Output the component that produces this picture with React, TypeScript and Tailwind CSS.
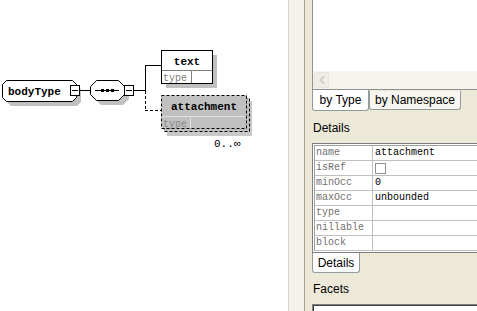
import React from "react";

const oct = (x: number, y: number, w: number, h: number, c: number) =>
  `${x + c},${y} ${x + w - c},${y} ${x + w},${y + c} ${x + w},${y + h - c} ${x + w - c},${y + h} ${x + c},${y + h} ${x},${y + h - c} ${x},${y + c}`;

const mono = "'Liberation Mono', 'DejaVu Sans Mono', monospace";

function Diagram() {
  return (
    <svg width="288" height="311" className="block" style={{ fontFamily: mono }}>
      {/* bodyType */}
      <polygon points={oct(7, 85, 74, 21, 4)} fill="#c0c0c0" />
      <polygon points={oct(2.5, 80.5, 74, 21, 4)} fill="#fff" stroke="#000" />
      <text x="8" y="94.5" fontSize="11" fontWeight="bold" fill="#000">bodyType</text>
      <rect x="70.5" y="85.5" width="9" height="10" fill="#fff" stroke="#000" />
      <line x1="72" y1="90.5" x2="78" y2="90.5" stroke="#000" />
      <line x1="80" y1="90.5" x2="90" y2="90.5" stroke="#000" />

      {/* sequence */}
      <polygon points={oct(95, 85, 34, 20, 6)} fill="#c0c0c0" />
      <polygon points={oct(90.5, 80.5, 34, 20, 6)} fill="#fff" stroke="#000" />
      <line x1="95" y1="90.5" x2="119" y2="90.5" stroke="#000" />
      <rect x="101" y="89" width="3" height="3" fill="#000" />
      <rect x="106" y="89" width="3" height="3" fill="#000" />
      <rect x="111" y="89" width="3" height="3" fill="#000" />
      <rect x="124.5" y="85.5" width="9" height="10" fill="#fff" stroke="#000" />
      <line x1="126" y1="90.5" x2="132" y2="90.5" stroke="#000" />
      <line x1="134" y1="90.5" x2="145" y2="90.5" stroke="#000" />

      {/* branches */}
      <line x1="145.5" y1="65" x2="145.5" y2="91" stroke="#000" />
      <line x1="145.5" y1="91" x2="145.5" y2="110" stroke="#000" strokeDasharray="3,2" />
      <line x1="145" y1="65.5" x2="162" y2="65.5" stroke="#000" />
      <line x1="145" y1="110.5" x2="162" y2="110.5" stroke="#000" strokeDasharray="3,2" />

      {/* text element */}
      <rect x="166" y="55" width="51" height="33" fill="#c0c0c0" />
      <rect x="161.5" y="50.5" width="51" height="33" fill="#fff" stroke="#000" />
      <line x1="162" y1="70.5" x2="212" y2="70.5" stroke="#808080" />
      <line x1="191.5" y1="71" x2="191.5" y2="83" stroke="#808080" />
      <text x="187" y="64.5" fontSize="11" fontWeight="bold" textAnchor="middle" fill="#000">text</text>
      <text x="163" y="81" fontSize="10" fill="#808080">type</text>

      {/* attachment element */}
      <rect x="167" y="101" width="85" height="35" fill="#c8c8c8" />
      <rect x="164.5" y="98.5" width="85" height="33" fill="#c0c0c0" stroke="#000" strokeDasharray="3,2" />
      <rect x="161.5" y="95.5" width="85" height="33" fill="#c0c0c0" stroke="#000" strokeDasharray="3,2" />
      <line x1="162" y1="116.5" x2="246" y2="116.5" stroke="#e0e0e0" />
      <line x1="190.5" y1="117" x2="190.5" y2="128" stroke="#e0e0e0" />
      <text x="204" y="110" fontSize="11" fontWeight="bold" textAnchor="middle" fill="#000">attachment</text>
      <text x="163" y="127" fontSize="10" fill="#8a8a8a">type</text>
      <text x="214" y="147" fontSize="11" fill="#000">0..∞</text>
    </svg>
  );
}

const rows: [string, string | null][] = [
  ["name", "attachment"],
  ["isRef", null],
  ["minOcc", "0"],
  ["maxOcc", "unbounded"],
  ["type", ""],
  ["nillable", ""],
  ["block", ""],
];

export default function App() {
  return (
    <div
      className="flex h-[311px] w-[477px] overflow-hidden bg-[#ece9d8] text-black"
      style={{ fontFamily: "'Liberation Sans', Arial, sans-serif" }}
    >
      <div className="w-[288px] shrink-0 bg-white">
        <Diagram />
      </div>
      <div className="w-[17px] shrink-0 border-l border-r border-l-[#d8d5c8] border-r-[#a5a291] bg-[#f4f2ea]" />
      <div className="flex w-[300px] shrink-0 flex-col pl-[7px]">
        {/* listbox */}
        <div className="flex h-[90px] shrink-0 flex-col border-b border-l border-[#8e8f8f] bg-white">
          <div className="flex-1" />
          <div className="flex h-[18px] shrink-0 items-center bg-[#f5f4ef] pl-[1px]">
            <div className="flex h-[16px] w-[15px] items-center justify-center rounded-[2px] border border-[#e6e4dc] bg-[#eeede6]">
              <svg width="6" height="8" viewBox="0 0 6 8">
                <path d="M5 0.5 L1.5 4 L5 7.5" fill="none" stroke="#c9c7ba" strokeWidth="1.5" />
              </svg>
            </div>
          </div>
        </div>
        {/* tabs */}
        <div className="flex h-[22px] shrink-0 items-start text-[12px] leading-none">
          <div className="flex h-[21px] w-[57px] items-center justify-center rounded-b-[3px] border border-t-0 border-[#919b9c] bg-white">
            by Type
          </div>
          <div className="mt-[1px] flex h-[19px] w-[92px] items-center justify-center rounded-b-[3px] border border-t-0 border-[#919b9c] bg-[#f6f5ef]">
            by Namespace
          </div>
        </div>
        <div className="mt-[8px] h-[16px] shrink-0 pl-[1px] text-[12px] leading-[16px]">Details</div>
        {/* details table */}
        <div className="mt-[7px] h-[110px] shrink-0 border border-r-0 border-[#7f7f7f] bg-white p-[1px] pr-0">
          <div className="border-l border-t border-[#a0a0a0]" style={{ fontFamily: mono }}>
            {rows.map(([k, v]) => (
              <div key={k} className="flex h-[15px] border-b border-[#c0c0c0] text-[10px] leading-[14px]">
                <div className="w-[58px] shrink-0 border-r border-[#c0c0c0] pl-[1px] text-[#707070]">{k}</div>
                <div className="flex items-center pl-[2px]">
                  {v === null ? (
                    <div className="h-[11px] w-[11px] border border-[#8e8f8f] bg-white" />
                  ) : (
                    <span>{v}</span>
                  )}
                </div>
              </div>
            ))}
          </div>
        </div>
        <div className="flex shrink-0">
          <div className="flex h-[20px] w-[48px] items-center justify-center rounded-b-[3px] border border-t-0 border-[#919b9c] bg-white text-[12px] leading-none">
            Details
          </div>
        </div>
        <div className="mt-[8px] h-[16px] shrink-0 pl-[1px] text-[12px] leading-[16px]">Facets</div>
        <div className="mt-[7px] h-[20px] shrink-0 border-l border-t border-[#7f7f7f] bg-white">
          <div className="h-full border-l border-t border-[#404040]" />
        </div>
      </div>
    </div>
  );
}
